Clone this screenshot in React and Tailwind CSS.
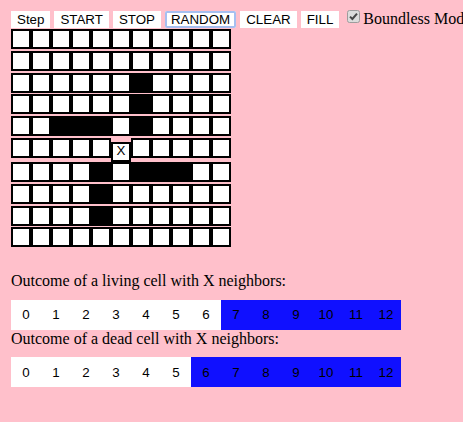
import React from "react";

const GRID = [
  "...........",
  "...........",
  "......#....",
  "......#....",
  "..###.#....",
  ".....X.....",
  "....#.###..",
  "....#......",
  "....#......",
  "...........",
];

const SANS = "font-['Liberation_Sans',Arial,sans-serif]";

function TopButton({ label, focused }) {
  return (
    <button
      className={
        "bg-white px-[6px] py-[1px] text-[13.333px] text-black align-baseline " +
        SANS +
        (focused ? " shadow-[inset_0_0_0_2px_#a6bff0] rounded-[2px]" : "")
      }
    >
      {label}
    </button>
  );
}

function Checkbox() {
  return (
    <svg
      width="13"
      height="13"
      viewBox="0 0 13 13"
      className="inline-block ml-[4px] mr-[3px] align-[1px]"
    >
      <rect x="0.5" y="0.5" width="12" height="12" rx="2" fill="#dcdcdc" stroke="#9c9c9c" />
      <path d="M3 6.6 L5.4 9 L10 3.6" stroke="#474747" strokeWidth="2" fill="none" />
    </svg>
  );
}

function Cell({ type }) {
  if (type === "X") {
    return (
      <div
        className={
          "w-[20px] h-[20px] mt-[4px] border-2 border-black bg-white flex items-center justify-center pb-[3px] text-[13.333px] text-black " +
          SANS
        }
      >
        X
      </div>
    );
  }
  return (
    <div
      className={
        "w-[20px] h-[20px] border-2 border-black " + (type === "#" ? "bg-black" : "bg-white")
      }
    />
  );
}

function NumberBar({ threshold }) {
  const nums = Array.from({ length: 13 }, (_, i) => i);
  return (
    <div className="flex">
      {nums.map((n) => (
        <div
          key={n}
          className={
            "w-[30px] h-[30px] flex items-center justify-center text-[13.333px] text-black " +
            SANS +
            (n >= threshold ? " bg-[#1010ff]" : " bg-white")
          }
        >
          {n}
        </div>
      ))}
    </div>
  );
}

export default function App() {
  return (
    <div className="w-[463px] h-[422px] overflow-hidden bg-[#ffc0cb] pl-[11px] pt-[10px] text-[16px] leading-[normal] text-black font-['Liberation_Serif','Times_New_Roman',serif]">
      <div className="h-[19px] whitespace-nowrap">
        <TopButton label="Step" /> <TopButton label="START" /> <TopButton label="STOP" />{" "}
        <TopButton label="RANDOM" focused /> <TopButton label="CLEAR" />{" "}
        <TopButton label="FILL" /> <Checkbox />Boundless Mode
      </div>
      <div className="flex flex-col">
        {GRID.map((row, r) => {
          const hasX = row.includes("X");
          const last = r === GRID.length - 1;
          return (
            <div
              key={r}
              className={
                "flex items-start " +
                (hasX ? "h-[24px]" : "h-[20px]") +
                (hasX || last ? "" : " mb-[1.8px]")
              }
            >
              {row.split("").map((c, i) => (
                <Cell key={i} type={c} />
              ))}
            </div>
          );
        })}
      </div>
      <div className="mt-[24.7px]">Outcome of a living cell with X neighbors:</div>
      <div className="mt-[9.5px]">
        <NumberBar threshold={7} />
      </div>
      <div>Outcome of a dead cell with X neighbors:</div>
      <div className="mt-[9.6px]">
        <NumberBar threshold={6} />
      </div>
    </div>
  );
}
